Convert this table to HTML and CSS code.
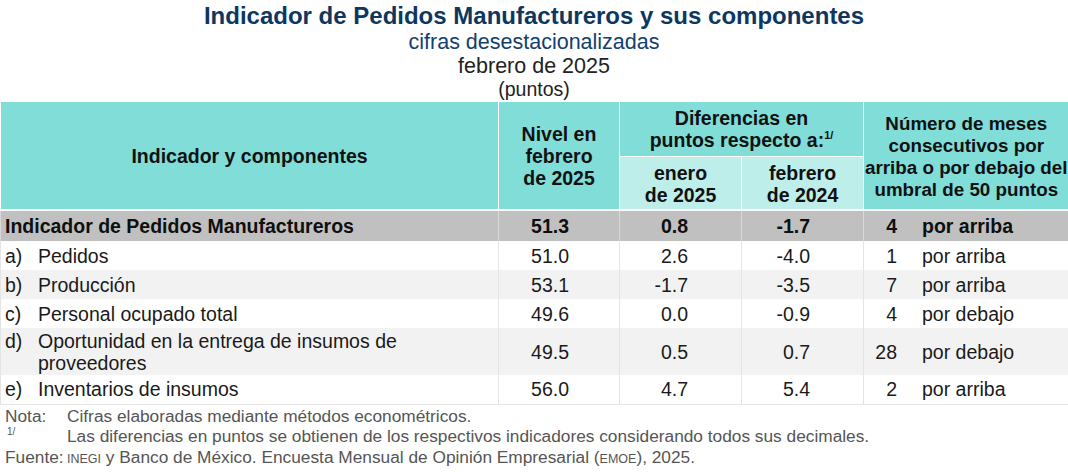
FILE: index.html
```html
<!DOCTYPE html>
<html lang="es">
<head>
<meta charset="utf-8">
<link rel="stylesheet" href="styles.css">
</head>
<body>
<div class="page">
  <header class="titles">
    <h1 class="title">Indicador de Pedidos Manufactureros y sus componentes</h1>
    <div class="subtitle">cifras desestacionalizadas</div>
    <div class="period">febrero de 2025</div>
    <div class="units">(puntos)</div>
  </header>
  <table class="grid">
    <colgroup>
      <col class="c-name"><col class="c-lvl"><col class="c-d1"><col class="c-d2"><col class="c-cnt">
    </colgroup>
    <thead>
      <tr class="h1">
        <th rowspan="2" class="th-name">Indicador y componentes</th>
        <th rowspan="2">Nivel en<br>febrero<br>de 2025</th>
        <th colspan="2" class="th-diff">Diferencias en<br>puntos respecto a:<sup>1/</sup></th>
        <th rowspan="2" class="th-cnt">Número de meses<br>consecutivos por<br>arriba o por debajo del<br>umbral de 50 puntos</th>
      </tr>
      <tr class="h2">
        <th class="sub">enero<br>de 2025</th>
        <th class="sub">febrero<br>de 2024</th>
      </tr>
    </thead>
    <tbody>
      <tr class="total">
        <td class="name">Indicador de Pedidos Manufactureros</td>
        <td class="num">51.3</td>
        <td class="num">0.8</td>
        <td class="num">-1.7</td>
        <td class="cnt"><span class="n">4</span><span class="t">por arriba</span></td>
      </tr>
      <tr>
        <td class="name"><span class="m">a)</span><span>Pedidos</span></td>
        <td class="num">51.0</td><td class="num">2.6</td><td class="num">-4.0</td>
        <td class="cnt"><span class="n">1</span><span class="t">por arriba</span></td>
      </tr>
      <tr class="alt">
        <td class="name"><span class="m">b)</span><span>Producción</span></td>
        <td class="num">53.1</td><td class="num">-1.7</td><td class="num">-3.5</td>
        <td class="cnt"><span class="n">7</span><span class="t">por arriba</span></td>
      </tr>
      <tr>
        <td class="name"><span class="m">c)</span><span>Personal ocupado total</span></td>
        <td class="num">49.6</td><td class="num">0.0</td><td class="num">-0.9</td>
        <td class="cnt"><span class="n">4</span><span class="t">por debajo</span></td>
      </tr>
      <tr class="alt tall">
        <td class="name"><span class="m">d)</span><span>Oportunidad en la entrega de insumos de<br>proveedores</span></td>
        <td class="num">49.5</td><td class="num">0.5</td><td class="num">0.7</td>
        <td class="cnt"><span class="n">28</span><span class="t">por debajo</span></td>
      </tr>
      <tr class="last">
        <td class="name"><span class="m">e)</span><span>Inventarios de insumos</span></td>
        <td class="num">56.0</td><td class="num">4.7</td><td class="num">5.4</td>
        <td class="cnt"><span class="n">2</span><span class="t">por arriba</span></td>
      </tr>
    </tbody>
  </table>
  <div class="notes">
    <div class="note"><span class="lbl">Nota:</span><span>Cifras elaboradas mediante métodos econométricos.</span></div>
    <div class="note"><span class="lbl"><sup>1/</sup></span><span>Las diferencias en puntos se obtienen de los respectivos indicadores considerando todos sus decimales.</span></div>
    <div class="note"><span class="lbl src">Fuente:</span><span><span class="sc">INEGI</span> y Banco de México. Encuesta Mensual de Opinión Empresarial (<span class="sc">EMOE</span>), 2025.</span></div>
  </div>
</div>
</body>
</html>
```

FILE: styles.css
```css
html, body {
  margin: 0;
  padding: 0;
  background: #ffffff;
}
body {
  font-family: "Liberation Sans", Arial, sans-serif;
  color: #1a1a1a;
}
.page {
  width: 1068px;
}
.titles {
  text-align: center;
  padding-top: 2px;
}
.title {
  margin: 0;
  font-size: 24px;
  line-height: 28px;
  font-weight: bold;
  color: #0d3761;
}
.subtitle {
  font-size: 21.5px;
  line-height: 24px;
  color: #12406e;
}
.period {
  font-size: 21.5px;
  line-height: 25px;
  color: #222222;
}
.units {
  font-size: 19.5px;
  line-height: 21px;
  color: #222222;
}
.grid {
  width: 1068px;
  table-layout: fixed;
  border-collapse: collapse;
  font-size: 19.5px;
}
.c-name { width: 498px; }
.c-lvl { width: 121px; }
.c-d1 { width: 122px; }
.c-d2 { width: 122px; }
.c-cnt { width: 205px; }

.grid th {
  background: #80ddd8;
  color: #111111;
  font-weight: bold;
  line-height: 22px;
  border: 1px solid #ffffff;
  padding: 0;
  vertical-align: middle;
  white-space: nowrap;
}
.grid thead tr:first-child th { border-top: 2px solid #ffffff; }
.h1 { height: 55px; }
.h2 { height: 54px; }
.grid th.sub {
  background: #bdeeea;
  padding-top: 2px;
}
.th-diff {
  padding-top: 2px;
}
.grid th.th-cnt {
  padding-top: 3px;
  font-size: 18.8px;
  border-right: none;
}
.grid sup {
  font-size: 11px;
  vertical-align: top;
  line-height: 14px;
  position: relative;
  top: -1px;
}
.grid td {
  padding: 0;
  border-left: 1px solid #e4e4e4;
  border-right: 1px solid #e4e4e4;
  line-height: 22px;
  color: #1a1a1a;
  white-space: nowrap;
}
.grid tbody tr { height: 29px; }
.grid tbody tr.tall { height: 47px; }
.grid tbody tr.alt td { background: #f2f2f2; }
.grid tbody tr.last td { border-bottom: 1px solid #e4e4e4; }
.grid tr.total { height: 31px; }
.grid tr.total td {
  background: #c0c0c0;
  font-weight: bold;
  border-left: 1px solid #d8d8d8;
  border-right: 1px solid #d8d8d8;
  border-top: 2px solid #ffffff;
  color: #0f0f0f;
}
.grid td.name {
  padding-left: 4px;
}
.name .m {
  display: inline-block;
  width: 33px;
  vertical-align: top;
}
.name .m + span {
  display: inline-block;
  vertical-align: top;
}
.grid td.num {
  text-align: right;
  padding-right: 53px;
}
.grid td.num:nth-child(2) { padding-right: 50px; }
.cnt .n {
  display: inline-block;
  width: 33px;
  text-align: right;
}
.cnt .t {
  display: inline-block;
  margin-left: 25px;
}
.notes {
  font-size: 17.3px;
  line-height: 20.5px;
  color: #555555;
  padding-left: 5px;
  padding-top: 1px;
}
.note {
  display: flex;
  white-space: nowrap;
}
.note .lbl {
  width: 62px;
  flex: none;
}
.note sup {
  font-size: 10px;
  vertical-align: top;
  line-height: 12px;
  padding-left: 2px;
}
.sc {
  font-size: 12.5px;
}
```
